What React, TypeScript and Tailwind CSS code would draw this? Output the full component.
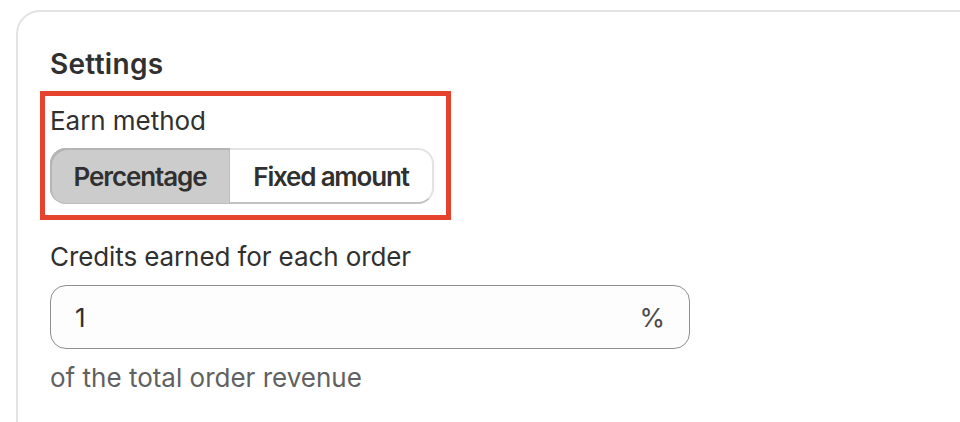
import React from "react";

export default function App() {
  const font = { fontFamily: 'Inter, "Noto Sans", sans-serif' };
  return (
    <div
      className="w-[960px] h-[422px] overflow-hidden bg-white"
      style={font}
    >
      <div className="ml-[16px] mt-[10px] w-[1000px] h-[520px] rounded-[24px] border-2 border-[#e3e3e3] bg-white pl-[32px] pt-[32px]">
        <h2 className="text-[28px] leading-[40px] font-semibold text-[#303030] tracking-[0.3px]">
          Settings
        </h2>

        <div className="mt-[7px] -ml-[10px] w-[411px] border-[5px] border-[#e5432d] pl-[5px] pt-[5px] pb-[11px]">
          <div className="text-[26px] leading-[40px] text-[#303030] tracking-[-0.05px]">
            Earn method
          </div>
          <div className="mt-[7px] flex h-[56px] w-fit rounded-[16px]">
            <button className="h-full w-[180px] shrink-0 whitespace-nowrap rounded-l-[16px] bg-[#cccccc] text-[26px] font-semibold text-[#303030] tracking-[-1.1px] shadow-[inset_2px_2px_0_#b5b5b5,inset_0_0_0_1px_#bdbdbd]">
              Percentage
            </button>
            <button className="h-full w-[204px] shrink-0 whitespace-nowrap rounded-r-[16px] bg-white text-[26px] font-semibold text-[#303030] tracking-[-1.2px] border-2 border-l-0 border-[#e3e3e3] border-b-[#c2c2c2]">
              Fixed amount
            </button>
          </div>
        </div>

        <div className="mt-[17px] text-[26px] leading-[40px] text-[#303030] tracking-[-0.1px]">
          Credits earned for each order
        </div>
        <div className="mt-[8px] flex h-[64px] w-[640px] items-center justify-between rounded-[16px] border-[1.5px] border-[#8f8f8f] bg-[#fdfdfd] px-[24px] text-[26px] text-[#303030]">
          <span>1</span>
          <span className="text-[#4a4a4a]">%</span>
        </div>
        <div className="mt-[9px] text-[26px] leading-[40px] text-[#616161] tracking-[0px]">
          of the total order revenue
        </div>
      </div>
    </div>
  );
}
